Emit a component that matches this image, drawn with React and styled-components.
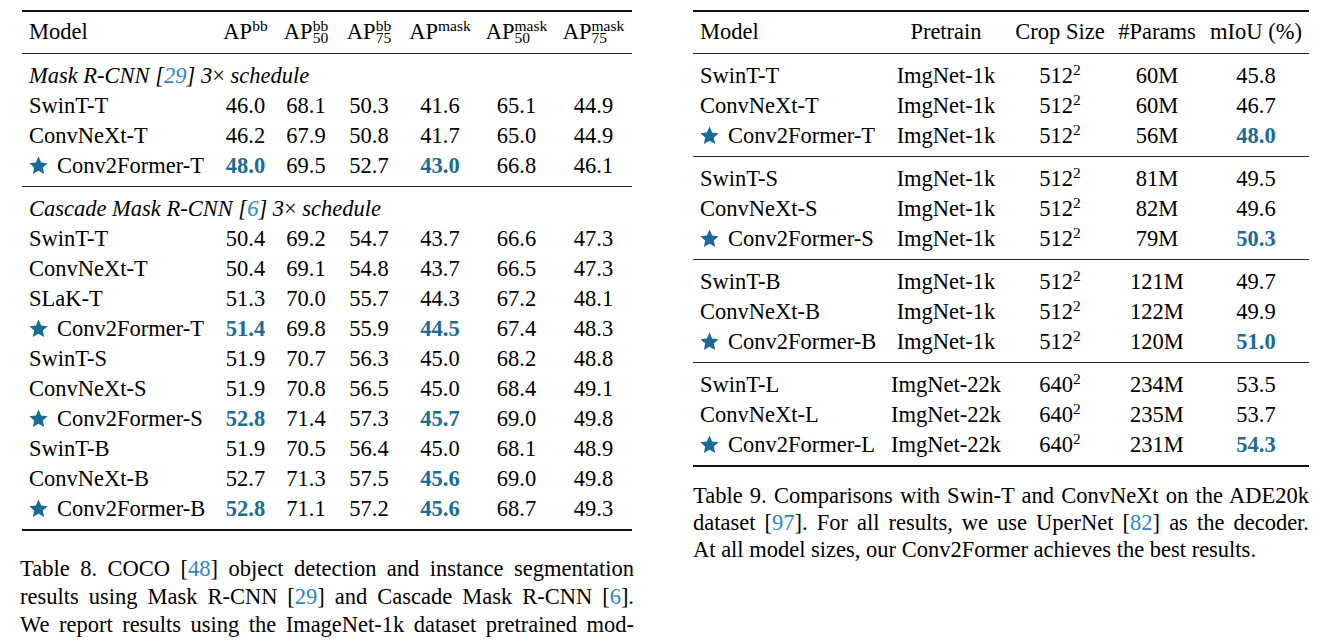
import React from 'react';
import styled, { createGlobalStyle } from 'styled-components';

const GlobalStyle = createGlobalStyle`
  body {
    margin: 0;
    background: #fff;
    color: #000;
    font-family: "Liberation Serif", "Times New Roman", serif;
  }
`;

const BLUE = '#1c6b96';
const LINK = '#2b86c6';

const Page = styled.div`
  display: flex;
  align-items: flex-start;
  gap: 59px;
  padding: 10px 0 0 20px;
`;

const Column = styled.div`
  flex: none;
  width: ${(p) => p.$width}px;
`;

const Table = styled.div`
  margin: 0 ${(p) => p.$inset}px;
  border-top: 2px solid #111;
  border-bottom: 2px solid #111;
`;

const Head = styled.div`
  padding: 5px 0 6px;
  border-bottom: 1px solid #222;
`;

const Group = styled.div`
  padding: 6.5px 0 5.5px;

  & + & {
    border-top: 1px solid #222;
  }
`;

const Row = styled.div`
  display: grid;
  grid-template-columns: ${(p) => p.$cols};
  height: 30px;
  line-height: 30px;
  font-size: 22.5px;
  white-space: nowrap;
`;

const Cell = styled.div`
  text-align: ${(p) => (p.$first ? 'left' : 'center')};
  padding-left: ${(p) => (p.$first ? '7px' : '0')};
`;

const GroupTitle = styled.div`
  height: 30px;
  line-height: 30px;
  font-size: 22.5px;
  font-style: italic;
  padding-left: 7px;
  white-space: nowrap;
`;

const Upright = styled.span`
  font-style: normal;
`;

const Cite = styled.span`
  color: ${LINK};
`;

const Best = styled.span`
  font-weight: bold;
  color: ${BLUE};
`;

const Scripts = styled.span`
  display: inline-block;
  font-size: 15.5px;
  line-height: 11.5px;
  vertical-align: ${(p) => (p.$single ? '8px' : '-3.5px')};
  text-align: left;

  & > span {
    display: block;
  }
`;

const StarIcon = styled.svg`
  width: 21px;
  height: 21px;
  vertical-align: -3.5px;
  margin: 0 8.3px 0 -1.3px;
  fill: ${BLUE};
`;

const Caption = styled.div`
  font-size: 22.5px;
  line-height: ${(p) => p.$lh}px;
  margin-top: ${(p) => p.$top}px;
`;

const Line = styled.div`
  text-align: justify;
  text-align-last: ${(p) => (p.$last ? 'left' : 'justify')};
`;

const Star = () => (
  <StarIcon viewBox="0 0 24 24">
    <polygon points="12,1.8 15.06,8.59 22.46,9.4 16.95,14.41 18.47,21.7 12,18 5.53,21.7 7.05,14.41 1.54,9.4 8.94,8.59" />
  </StarIcon>
);

const AP = ({ sup, sub }) => (
  <>
    AP
    <Scripts $single={!sub}>
      <span>{sup}</span>
      {sub && <span>{sub}</span>}
    </Scripts>
  </>
);

const Sq = ({ base }) => (
  <>
    {base}
    <Scripts $single>
      <span>2</span>
    </Scripts>
  </>
);

const ModelName = ({ name, ours }) =>
  ours ? (
    <>
      <Star />
      {name}
    </>
  ) : (
    name
  );

const Value = ({ v }) => (v.endsWith('*') ? <Best>{v.slice(0, -1)}</Best> : v);

const cocoCols = '193px 61px 60px 66px 76px 77px 77px';

const cocoGroups = [
  {
    title: (
      <>
        Mask R-CNN [<Cite>29</Cite>] 3<Upright>×</Upright> schedule
      </>
    ),
    rows: [
      ['SwinT-T', '46.0', '68.1', '50.3', '41.6', '65.1', '44.9'],
      ['ConvNeXt-T', '46.2', '67.9', '50.8', '41.7', '65.0', '44.9'],
      ['*Conv2Former-T', '48.0*', '69.5', '52.7', '43.0*', '66.8', '46.1'],
    ],
  },
  {
    title: (
      <>
        Cascade Mask R-CNN [<Cite>6</Cite>] 3<Upright>×</Upright> schedule
      </>
    ),
    rows: [
      ['SwinT-T', '50.4', '69.2', '54.7', '43.7', '66.6', '47.3'],
      ['ConvNeXt-T', '50.4', '69.1', '54.8', '43.7', '66.5', '47.3'],
      ['SLaK-T', '51.3', '70.0', '55.7', '44.3', '67.2', '48.1'],
      ['*Conv2Former-T', '51.4*', '69.8', '55.9', '44.5*', '67.4', '48.3'],
      ['SwinT-S', '51.9', '70.7', '56.3', '45.0', '68.2', '48.8'],
      ['ConvNeXt-S', '51.9', '70.8', '56.5', '45.0', '68.4', '49.1'],
      ['*Conv2Former-S', '52.8*', '71.4', '57.3', '45.7*', '69.0', '49.8'],
      ['SwinT-B', '51.9', '70.5', '56.4', '45.0', '68.1', '48.9'],
      ['ConvNeXt-B', '52.7', '71.3', '57.5', '45.6*', '69.0', '49.8'],
      ['*Conv2Former-B', '52.8*', '71.1', '57.2', '45.6*', '68.7', '49.3'],
    ],
  },
];

const adeCols = '190px 126px 102px 92px 106px';

const adeGroups = [
  [
    ['SwinT-T', 'ImgNet-1k', '512', '60M', '45.8'],
    ['ConvNeXt-T', 'ImgNet-1k', '512', '60M', '46.7'],
    ['*Conv2Former-T', 'ImgNet-1k', '512', '56M', '48.0*'],
  ],
  [
    ['SwinT-S', 'ImgNet-1k', '512', '81M', '49.5'],
    ['ConvNeXt-S', 'ImgNet-1k', '512', '82M', '49.6'],
    ['*Conv2Former-S', 'ImgNet-1k', '512', '79M', '50.3*'],
  ],
  [
    ['SwinT-B', 'ImgNet-1k', '512', '121M', '49.7'],
    ['ConvNeXt-B', 'ImgNet-1k', '512', '122M', '49.9'],
    ['*Conv2Former-B', 'ImgNet-1k', '512', '120M', '51.0*'],
  ],
  [
    ['SwinT-L', 'ImgNet-22k', '640', '234M', '53.5'],
    ['ConvNeXt-L', 'ImgNet-22k', '640', '235M', '53.7'],
    ['*Conv2Former-L', 'ImgNet-22k', '640', '231M', '54.3*'],
  ],
];

const NameCell = ({ raw }) => {
  const ours = raw.startsWith('*');
  return (
    <Cell $first>
      <ModelName name={ours ? raw.slice(1) : raw} ours={ours} />
    </Cell>
  );
};

const CocoTable = () => (
  <Table $inset={2}>
    <Head>
      <Row $cols={cocoCols}>
        <Cell $first>Model</Cell>
        <Cell><AP sup="bb" /></Cell>
        <Cell><AP sup="bb" sub="50" /></Cell>
        <Cell><AP sup="bb" sub="75" /></Cell>
        <Cell><AP sup="mask" /></Cell>
        <Cell><AP sup="mask" sub="50" /></Cell>
        <Cell><AP sup="mask" sub="75" /></Cell>
      </Row>
    </Head>
    {cocoGroups.map((g, i) => (
      <Group key={i}>
        <GroupTitle>{g.title}</GroupTitle>
        {g.rows.map((r, j) => (
          <Row key={j} $cols={cocoCols}>
            <NameCell raw={r[0]} />
            {r.slice(1).map((v, k) => (
              <Cell key={k}><Value v={v} /></Cell>
            ))}
          </Row>
        ))}
      </Group>
    ))}
  </Table>
);

const AdeTable = () => (
  <Table $inset={0}>
    <Head>
      <Row $cols={adeCols}>
        <Cell $first>Model</Cell>
        <Cell>Pretrain</Cell>
        <Cell>Crop Size</Cell>
        <Cell>#Params</Cell>
        <Cell>mIoU (%)</Cell>
      </Row>
    </Head>
    {adeGroups.map((rows, i) => (
      <Group key={i}>
        {rows.map((r, j) => (
          <Row key={j} $cols={adeCols}>
            <NameCell raw={r[0]} />
            <Cell>{r[1]}</Cell>
            <Cell><Sq base={r[2]} /></Cell>
            <Cell>{r[3]}</Cell>
            <Cell><Value v={r[4]} /></Cell>
          </Row>
        ))}
      </Group>
    ))}
  </Table>
);

export default function App() {
  return (
    <>
      <GlobalStyle />
      <Page>
        <Column $width={614}>
          <CocoTable />
          <Caption $lh={28} $top={24}>
            <Line>Table 8. COCO [<Cite>48</Cite>] object detection and instance segmentation</Line>
            <Line>results using Mask R-CNN [<Cite>29</Cite>] and Cascade Mask R-CNN [<Cite>6</Cite>].</Line>
            <Line>We report results using the ImageNet-1k dataset pretrained mod-</Line>
          </Caption>
        </Column>
        <Column $width={616}>
          <AdeTable />
          <Caption $lh={27} $top={15}>
            <Line>Table 9. Comparisons with Swin-T and ConvNeXt on the ADE20k</Line>
            <Line>dataset [<Cite>97</Cite>]. For all results, we use UperNet [<Cite>82</Cite>] as the decoder.</Line>
            <Line $last>At all model sizes, our Conv2Former achieves the best results.</Line>
          </Caption>
        </Column>
      </Page>
    </>
  );
}
